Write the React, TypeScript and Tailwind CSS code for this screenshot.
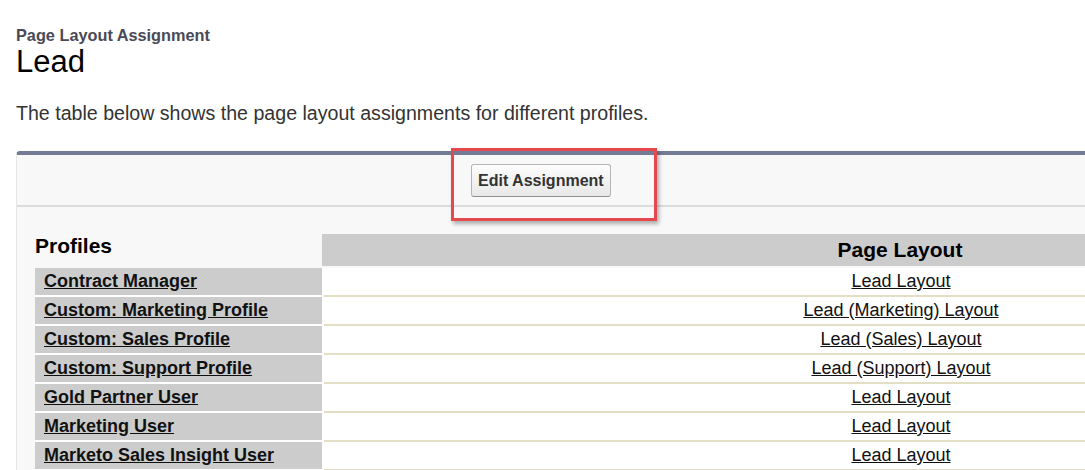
const profiles = [
  { name: "Contract Manager", layout: "Lead Layout" },
  { name: "Custom: Marketing Profile", layout: "Lead (Marketing) Layout" },
  { name: "Custom: Sales Profile", layout: "Lead (Sales) Layout" },
  { name: "Custom: Support Profile", layout: "Lead (Support) Layout" },
  { name: "Gold Partner User", layout: "Lead Layout" },
  { name: "Marketing User", layout: "Lead Layout" },
  { name: "Marketo Sales Insight User", layout: "Lead Layout" },
];

const App = () => {
  return (
    <div
      className="relative w-[1085px] h-[470px] overflow-hidden bg-white"
      style={{ fontFamily: '"Liberation Sans", Arial, sans-serif' }}
    >
      {/* Page header */}
      <div className="pl-4 pt-[26px]">
        <div className="text-[16.3px] leading-[18px] font-bold text-[#4a4a56]">
          Page Layout Assignment
        </div>
        <h1 className="text-[31px] leading-[36px] text-black">Lead</h1>
        <p className="mt-[22px] text-[19.6px] leading-[22px] text-[#333333]">
          The table below shows the page layout assignments for different profiles.
        </p>
      </div>

      {/* Panel */}
      <div className="ml-4 mt-[27px] w-[1480px] border-t-4 border-l border-t-[#737c94] border-l-[#e6e6e6] rounded-tl-[4px] bg-[#f8f8f8]">
        <div className="h-[50px] pt-[9px] pl-[454px]">
          <button className="h-[33px] px-[6px] rounded-[3px] border border-[#b5b5b5] border-b-[#8f8f8f] bg-gradient-to-b from-[#fdfdfd] to-[#e8e8e8] text-[16px] font-bold text-[#333333] leading-[31px]">
            Edit Assignment
          </button>
        </div>
        <div className="h-[2px] bg-[#dcdcdc]" />

        <div className="pl-[18px] pt-[27px]">
          {/* Header row */}
          <div className="flex h-[32px] mb-[2px]">
            <div className="w-[287px] text-[21px] leading-[24px] font-bold text-black">
              Profiles
            </div>
            <div className="w-[1156px] bg-[#cccccc] text-center text-[21px] leading-[32px] font-bold text-black">
              Page Layout
            </div>
          </div>

          {/* Rows */}
          <div className="flex flex-col">
            {profiles.map((p) => (
              <div key={p.name} className="flex h-[29px] bg-white">
                <div className="w-[287px] h-[27px] bg-[#cccccc] pl-[9px] text-[18px] leading-[27px] font-bold">
                  <a className="underline text-[#111111] cursor-pointer">{p.name}</a>
                </div>
                <div className="ml-[2px] w-[1154px] h-[29px] border-b-2 border-[#e3dfc5] text-center text-[18px] leading-[27px]">
                  <a className="underline text-[#111111] cursor-pointer">{p.layout}</a>
                </div>
              </div>
            ))}
          </div>
        </div>
      </div>

      {/* Annotation box */}
      <div className="absolute left-[451px] top-[148px] w-[206px] h-[73px] border-[3px] border-[#e5484d] shadow-[2px_3px_4px_rgba(0,0,0,0.3)] pointer-events-none" />
    </div>
  );
};

export default App;
